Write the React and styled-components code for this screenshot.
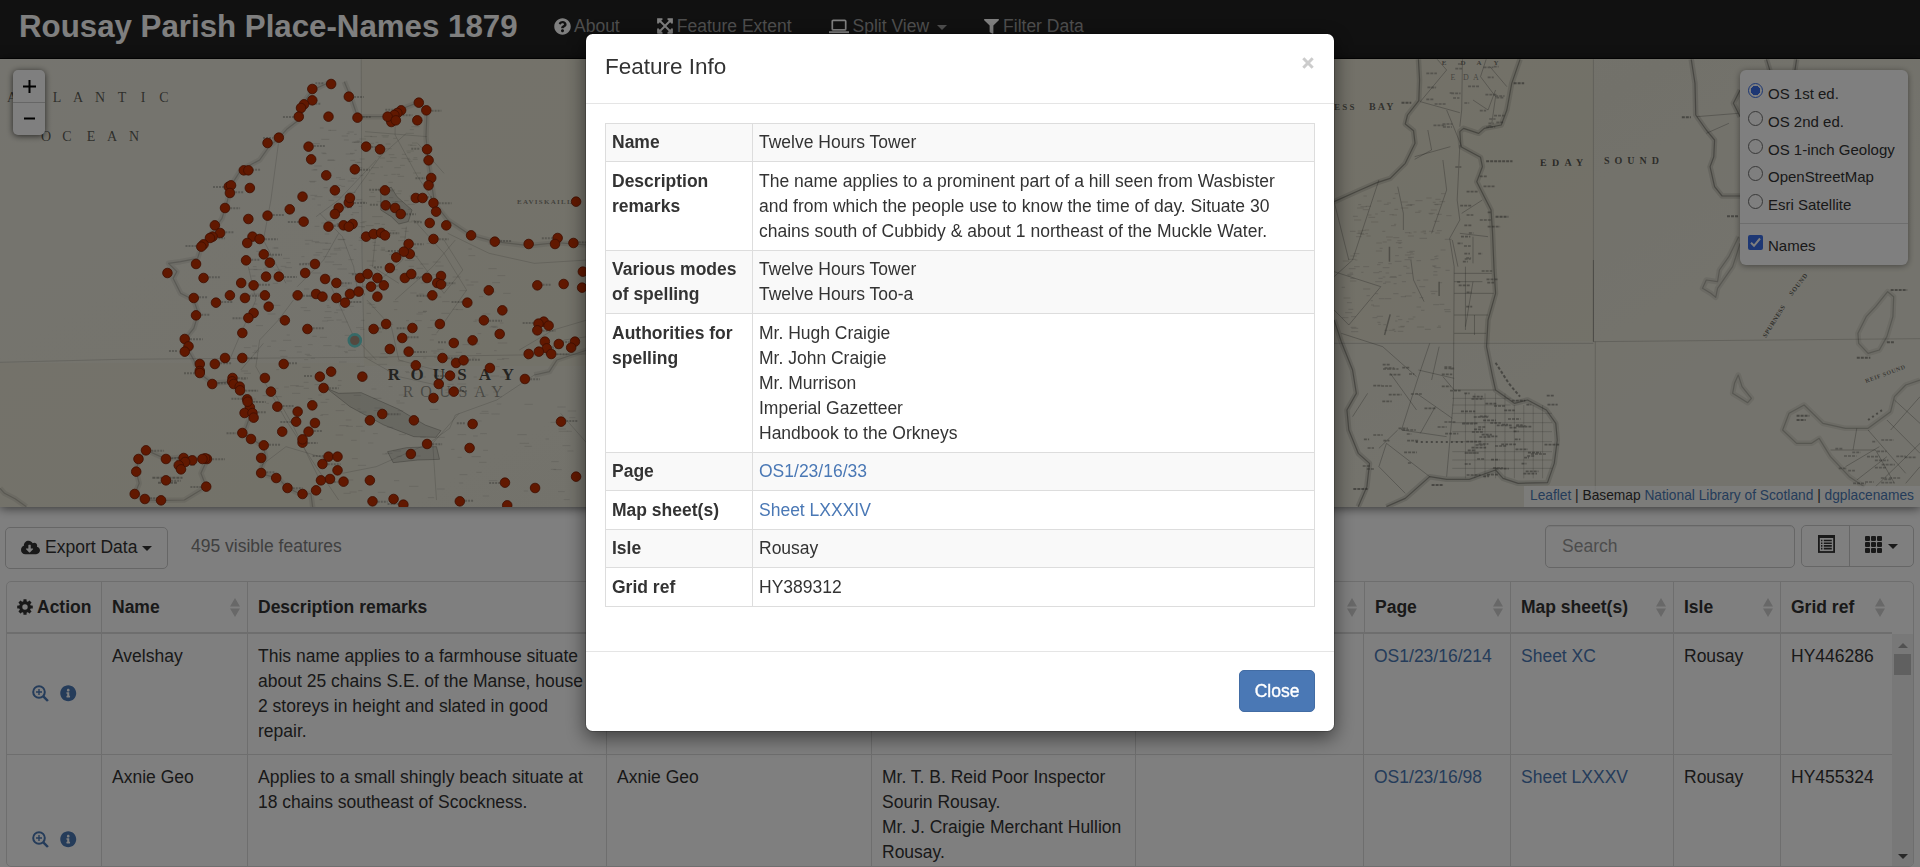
import React from "react";
import styled, { createGlobalStyle } from "styled-components";
import { FaQuestionCircle, FaExpandArrowsAlt, FaFilter, FaCloudDownloadAlt, FaInfoCircle } from "react-icons/fa";

const LINK = "#4a78b5";

const GlobalStyle = createGlobalStyle`
  * { box-sizing: border-box; }
  html, body { margin: 0; height: 100%; overflow: hidden; }
  body {
    font: 17.5px/25px "Liberation Sans", Arial, sans-serif;
    color: #333;
    background: #fff;
  }
  #root { height: 100%; }
`;

const Page = styled.div`
  height: 867px;
  display: flex;
  flex-direction: column;
  overflow: hidden;
`;

/* ---------- navbar ---------- */
const Navbar = styled.nav`
  flex: none;
  height: 59px;
  display: flex;
  align-items: flex-start;
  background: #222;
  border-bottom: 1px solid #080808;
  padding-left: 19px;
`;
const Brand = styled.h1`
  margin: 0 37px 0 0;
  width: 498px;
  font-size: 31.25px;
  line-height: 53px;
  font-weight: bold;
  color: #fff;
  white-space: nowrap;
`;
const NavItem = styled.a`
  display: flex;
  align-items: center;
  height: 52px;
  gap: ${(p) => p.$gap || 3}px;
  margin-right: ${(p) => p.$after}px;
  color: #9d9d9d;
  white-space: nowrap;
  svg { color: #fff; }
`;
const Caret = styled.span`
  width: 0;
  height: 0;
  margin: ${(p) => p.$m || "3px 0 0 4px"};
  border: 5px solid transparent;
  border-top-color: currentColor;
  border-bottom: 0;
`;

/* ---------- map ---------- */
const MapPane = styled.section`
  flex: none;
  position: relative;
  height: 448px;
  background: #e8e6d8;
  box-shadow: 0 1px 10px rgba(0, 0, 0, 0.6);
  z-index: 1;
`;
const MapSvg = styled.svg`
  display: block;
  width: 1920px;
  height: 448px;
`;
const ZoomControl = styled.div`
  position: absolute;
  left: 13px;
  top: 11px;
  width: 32px;
  border-radius: 5px;
  background: #fff;
  box-shadow: 0 1px 6px rgba(0, 0, 0, 0.65);
`;
const ZoomButton = styled.div`
  height: 32px;
  display: flex;
  align-items: center;
  justify-content: center;
  color: #000;
  & + & { height: 33px; padding-bottom: 2px; border-top: 1px solid #ccc; }
`;
const Layers = styled.div`
  position: absolute;
  top: 11px;
  right: 12px;
  width: 168px;
  height: 195px;
  padding: 8px 0 0 8px;
  border-radius: 6px;
  background: #fff;
  box-shadow: 0 1px 6px rgba(0, 0, 0, 0.4);
  font-size: 15px;
`;
const LayerRow = styled.label`
  display: flex;
  align-items: flex-start;
  height: 27.8px;
  gap: 5px;
  line-height: 31.5px;
  white-space: nowrap;
`;
const LayerMark = styled.span`
  flex: none;
  width: 15px;
  height: 15px;
  margin-top: 5px;
  border-radius: 50%;
  border: 1.3px solid ${(p) => (p.$on ? "#3a6fe8" : "#707070")};
  background: ${(p) => (p.$on ? "radial-gradient(circle, #3a6fe8 4.5px, #fff 5px)" : "#fff")};
`;
const LayerCheck = styled.svg`
  flex: none;
  width: 15px;
  height: 15px;
  margin-top: 5px;
`;
const LayerDivider = styled.div`
  margin: 6px 0 6px -8px;
  border-top: 1px solid #ddd;
`;
const Attribution = styled.div`
  position: absolute;
  right: 0;
  bottom: 0;
  width: 396px;
  padding: 0 6px;
  background: rgba(255, 255, 255, 0.7);
  font-size: 13.75px;
  line-height: 20px;
  height: 21px;
  white-space: nowrap;
`;
const Link = styled.a`
  color: ${LINK};
`;

/* ---------- table panel ---------- */
const Panel = styled.section`
  flex: 1;
  min-height: 0;
  display: flex;
  flex-direction: column;
  padding: 18px 6px 0 5px;
`;
const Toolbar = styled.div`
  flex: none;
  height: 56px;
  display: flex;
  align-items: flex-start;
`;
const ExportButton = styled.button`
  display: flex;
  align-items: center;
  width: 163px;
  height: 42px;
  margin: 2px 23px 0 0;
  padding: 0 0 2px 15px;
  gap: 5px;
  border: 1px solid #ccc;
  border-radius: 5px;
  background: #fff;
  font: inherit;
  color: #333;
  white-space: nowrap;
`;
const Count = styled.span`
  margin-top: 9px;
  color: #808080;
`;
const Search = styled.div`
  width: 250px;
  height: 43px;
  margin-left: auto;
  padding-left: 16px;
  border: 1px solid #ccc;
  border-radius: 5px;
  box-shadow: inset 0 1px 1px rgba(0, 0, 0, 0.075);
  line-height: 41px;
  color: #999;
`;
const ButtonGroup = styled.div`
  display: flex;
  width: 113px;
  height: 42px;
  margin-left: 6px;
  border: 1px solid #ccc;
  border-radius: 5px;
`;
const GroupButton = styled.div`
  display: flex;
  align-items: center;
  padding: 0 0 4px 16px;
  width: ${(p) => p.$w}px;
  & + & { border-left: 1px solid #ccc; padding-left: 15px; }
`;
const Table = styled.div`
  flex: none;
  display: flex;
  flex-direction: column;
  margin-left: 1px;
  height: 286px;
  border: 1px solid #ddd;
  border-radius: 5px;
  overflow: hidden;
`;
const HeadRow = styled.div`
  flex: none;
  display: grid;
  grid-template-columns: 94px 146px 359px 265px 264px 229px 146px 163px 107px 112px;
  width: 1885px;
  height: 52px;
  border-bottom: 2px solid #ddd;
`;
const HeadCell = styled.div`
  display: flex;
  align-items: center;
  justify-content: space-between;
  gap: 4px;
  padding: 0 7px 0 10px;
  font-weight: bold;
  white-space: nowrap;
  & + & { border-left: 1px solid #ddd; }
  &:first-child { justify-content: flex-start; }
`;
const Body = styled.div`
  flex: 1;
  min-height: 0;
  display: flex;
`;
const Rows = styled.div`
  width: 1885px;
  overflow: hidden;
`;
const Row = styled.div`
  display: grid;
  grid-template-columns: 94px 146px 359px 265px 264px 228px 147px 163px 107px 112px;
  height: ${(p) => p.$h}px;
  border-bottom: 1px solid #ddd;
`;
const Cell = styled.div`
  padding: 10px 10px 0;
  border-left: 1px solid #ddd;
  white-space: pre-line;
`;
const ActionCell = styled.div`
  display: flex;
  align-items: center;
  gap: 11px;
  padding: 0 0 1px 25px;
  color: ${LINK};
`;
const ScrollTrack = styled.div`
  flex: 1;
  display: flex;
  flex-direction: column;
  align-items: center;
  justify-content: space-between;
  padding: 9px 0 7px;
  background: #f1f1f1;
`;
const ScrollTop = styled.div`
  display: flex;
  flex-direction: column;
  align-items: center;
  gap: 6px;
`;
const Thumb = styled.div`
  width: 17px;
  height: 21px;
  background: #c1c1c1;
`;

/* ---------- modal ---------- */
const Backdrop = styled.div`
  position: fixed;
  inset: 0;
  z-index: 10;
  display: flex;
  justify-content: center;
  align-items: flex-start;
  padding-top: 33px;
  background: rgba(0, 0, 0, 0.5);
`;
const Dialog = styled.div`
  width: 750px;
  height: 699px;
  border: 1px solid rgba(0, 0, 0, 0.2);
  border-radius: 7.5px;
  background: #fff;
  background-clip: padding-box;
  box-shadow: 0 6px 19px rgba(0, 0, 0, 0.5);
`;
const DialogHeader = styled.header`
  display: flex;
  justify-content: space-between;
  height: 70px;
  padding: 17px 20px 0 19px;
  border-bottom: 1px solid #e5e5e5;
`;
const DialogTitle = styled.h4`
  margin: 0;
  font-size: 22.5px;
  font-weight: normal;
  line-height: 32px;
`;
const CloseMark = styled.svg`
  width: 12px;
  height: 12px;
  margin-top: 6px;
`;
const DialogBody = styled.div`
  height: 548px;
  padding: 19px 19px 0;
  border-bottom: 1px solid #e5e5e5;
`;
const InfoTable = styled.dl`
  margin: 0;
  width: 710px;
  border: 1px solid #ddd;
  border-bottom: 0;
`;
const InfoRow = styled.div`
  --pad: ${(p) => (p.$h % 2 ? 7 : 6)}px;
  display: grid;
  grid-template-columns: 147px 1fr;
  height: ${(p) => p.$h}px;
  border-bottom: 1px solid #ddd;
  &:nth-child(3) { --pad: 6px; }
  &:nth-child(odd) { background: #f9f9f9; }
`;
const InfoLabel = styled.dt`
  padding: var(--pad) 6px 0;
  border-right: 1px solid #ddd;
  font-weight: bold;
`;
const InfoValue = styled.dd`
  margin: 0;
  padding: var(--pad) 6px 0;
  white-space: pre-line;
`;
const DialogFooter = styled.footer`
  display: flex;
  justify-content: flex-end;
  padding: 18px 19px 0;
`;
const CloseButton = styled.button`
  width: 76px;
  height: 42px;
  padding: 0;
  border: 1px solid #426ca4;
  border-radius: 5px;
  background: ${LINK};
  color: #fff;
  font: inherit;
  -webkit-text-stroke: 0.35px #fff;
`;

/* ---------- icons ---------- */
const LaptopIcon = () => (
  <svg width="20" height="15" viewBox="0 0 20 15" fill="none" stroke="currentColor">
    <rect x="3.3" y="1.3" width="13.4" height="9.6" rx="1" strokeWidth="1.7" />
    <path d="M0 13.2h20" strokeWidth="2" />
  </svg>
);
const CogIcon = () => (
  <svg width="16" height="16" viewBox="-8 -8 16 16">
    {[0, 45, 90, 135].map((a) => (
      <rect key={a} x="-1.6" y="-7.8" width="3.2" height="15.6" rx=".5" transform={`rotate(${a})`} fill="#333" />
    ))}
    <circle r="4.3" fill="#fff" stroke="#333" strokeWidth="3.2" />
  </svg>
);
const ZoomInIcon = () => (
  <svg width="17" height="17" viewBox="0 0 17 17" fill="none" stroke="currentColor">
    <circle cx="7" cy="7" r="5.8" strokeWidth="2" />
    <path d="M7 4v6M4 7h6" strokeWidth="1.4" />
    <path d="M11.3 11.3l4.6 4.7" strokeWidth="2.5" />
  </svg>
);
const ListIcon = () => (
  <svg width="17" height="18" viewBox="0 0 17 18" fill="none" stroke="#333">
    <rect x=".9" y="1.2" width="15.2" height="15.8" strokeWidth="1.8" />
    <path d="M0 1.5h17" strokeWidth="3" />
    <path d="M5.8 5.5h8M5.8 8.2h8M5.8 10.9h8M5.8 13.6h8" strokeWidth="1.6" />
    <path d="M3 5.5h1.4M3 8.2h1.4M3 10.9h1.4M3 13.6h1.4" strokeWidth="1.6" />
  </svg>
);
const GridIcon = () => (
  <svg width="17" height="17" viewBox="0 0 17 17" fill="#333">
    {[0, 6, 12].map((y) => [0, 6, 12].map((x) => <rect key={x + "-" + y} x={x} y={y} width="5" height="5" rx="1" />))}
  </svg>
);
const SortIcon = () => (
  <svg width="10" height="19" viewBox="0 0 10 19" fill="#d0d0d0">
    <path d="M5 0l5 8.6H0zM5 19l5-8.6H0z" />
  </svg>
);

/* ---------- map data ----------
   Coordinates are in sheet units; SHEET converts them to pixels. */
const SHEET = { x: 0.37628, y: 1 / 3 };

const FEATURES = `880,252 830,267 927,290 830,301 808,313 800,324 794,350 873,350 950,353 1113,308 1133,331 1109,361 1066,331 1056,339 1048,345 1040,366 1030,350 1052,361
741,413 711,429 820,440 827,478 973,440 1010,448 1135,448 1139,481 943,508 867,526 648,511 660,511 608,560 614,556 611,579 664,564 598,624 890,571 1023,571 804,590 927,608 930,594 900,624 890,642
1146,534 1139,556 1105,594 1123,594 1152,609 1159,635 1025,616 1050,624 1065,642 770,628 711,647 660,657 807,665 571,676 585,699 565,710 558,714 541,733 535,740 671,710 690,717 657,729 873,680 913,676 937,672 927,680
973,710 993,702 1013,699 1023,706 1142,669 1186,676 1152,717 1252,706 1315,725 1405,732 1482,714 1475,732 1524,729 1531,605 1086,732 1089,762 1073,755 1053,772
701,763 521,792 654,781 717,788 837,792 445,819 541,834 707,830 741,830 811,819 1036,804 864,837 894,849 641,849 674,856 957,834 977,822 1003,834 986,860 1020,856 1076,834 1093,822 1135,834 1172,828 1162,849 1172,853
515,894 611,886 704,886 651,894 574,908 714,920 791,886 840,882 857,890 894,894 930,882 953,875 917,908 1003,890 1149,886 1299,871 1428,856 1498,852 1549,815 1547,863 1242,908 1335,931 1286,961 1328,1002
521,946 674,939 660,954 757,961 817,987 644,999 491,1017 501,1039 491,1055 598,1074 644,1074 531,1092 571,1092 531,1113 531,1119 564,1152 754,1092 704,1134 618,1134 617,1144 621,1152 637,1160 638,1171 720,1175
993,987 1026,972 1096,984 1169,972 1069,1014 1036,1047 1086,1055 1105,1096 1206,1029 1256,1021 1176,1074 1212,1089 1232,1081 1302,1104 1196,1127 1166,1152 1206,1175 1152,1194 1395,1137 1445,965 1431,971 1458,977 1428,991 1448,1025 1453,1045 1485,1032 1528,1025 1518,1043 1432,1055 1405,1062 1465,1062
880,1115 850,1130 963,1130 860,1164 830,1216 737,1220 791,1235 787,1265 837,1269 820,1295 750,1295 804,1328 804,1318 657,1198 664,1222 658,1205 650,1239 671,1239 674,1253 644,1299 667,1317 701,1336
983,1261 1016,1242 1100,1261 1256,1272 1248,1344 1135,1332 1092,1362 1491,1265 1531,1430 1342,1448 1422,1464 1222,1504 1348,1516 990,1504 1046,1497 1072,1514 983,1441
388,1351 368,1377 441,1377 488,1374 511,1381 492,1386 475,1396 481,1408 550,1377 545,1375 538,1377 362,1415 441,1441 358,1482 385,1497 428,1501 548,1460 694,1374 694,1419 734,1434 764,1464 804,1482 873,1370 897,1370 857,1392 897,1411 853,1441 877,1437 913,1445 840,1471`
  .trim()
  .split(/\s+/)
  .map((pair) => pair.split(",").map(Number));

const WEST_COAST = [
  "M880 245L830 270 800 320 800 355 762 388 740 415 715 440 690 480 640 510 612 560 605 600 590 655 568 690 535 740 525 775 480 785 448 790 470 815 460 835 480 880 515 900 527 940 515 985 490 1020 500 1050 515 1080 530 1120 565 1150 615 1145 650 1190 664 1250 648 1300 700 1340 706 1370 690 1420 740 1435 764 1464 804 1485 826 1480 832 1530",
  "M915 245L935 300 950 350 1030 350 1060 330 1110 308 1135 330 1132 410 1138 480 1145 535 1155 610 1190 660 1250 705 1315 725 1405 737 1480 728 1560 735",
  "M390 1351L368 1377 362 1415 370 1450 358 1482 390 1500 428 1501 490 1500 548 1460 534 1420 550 1380 490 1370 441 1377Z",
  "M0 1465L12 1480 40 1496 70 1520",
  "M1560 1050L1480 1080 1460 1115 1420 1125",
];
const LOCHS = [
  "M868 1165L900 1180 960 1178 1060 1228 1130 1275 1172 1292 1158 1312 1100 1310 1020 1275 930 1220Z",
  "M1030 1355L1080 1343 1160 1340 1168 1378 1110 1380 1045 1388Z",
  "M1012 570L1040 562 1055 590 1095 630 1085 665 1060 672 1040 650 1012 630Z",
];
const WEST_ROADS = [
  "M960 178L962 760 968 1072", "M0 1087L320 1078 960 1072 1560 1062",
  "M1050 345V405L1110 530 1145 590", "M1135 410L970 395", "M850 640L910 710 940 800 950 870",
  "M1420 1125L1320 1200 1210 1245 1195 1285 1140 1330 1000 1400 910 1420",
  "M1000 480L900 600 840 650", "M1080 400L1010 470 940 580", "M1080 680L1070 780 1000 850", "M1100 660L1180 760 1240 870 1160 1000",
  "M1190 700L1300 760 1420 790 1560 780", "M780 900L740 960 690 1020 680 1100 760 1260 840 1400 900 1500", "M720 1160L780 1280 850 1440",
  "M660 800L680 900 640 1000 610 1080", "M1210 720L1150 800 1050 900", "M975 900L1040 980 1060 1080 1190 1120", "M740 430L720 600 700 720 760 850",
  "M1220 1240L1150 1330 1160 1500", "M970 1072L1060 1130 1180 1160", "M1380 1050L1470 990 1560 960", "M1400 1080L1500 1020 1560 1010",
  "M690 1400L760 1340 880 1380", "M1110 430L1180 520", "M1100 760L1180 880 1230 810 1180 720", "M900 700L860 780 790 860",
  "M1000 690L990 800 1060 850", "M1490 1240L1560 1330", "M700 1030L640 1110", "M880 860L940 1010 1000 1080",
];
const EAST_COAST = [
  "M235 178L238 240 236 302 206 345 200 372 222 392 226 430 200 490 160 535 125 548 80 570 11 605",
  "M505 178L483 250 470 330 455 375 410 385 395 400 355 385 345 395 348 440 400 472 405 500 390 545 410 590 428 630 432 700 436 810 440 880 420 960 416 1040 432 1130 440 1170 490 1210 525 1200 575 1230 600 1270 604 1320 596 1390 578 1448 500 1450 460 1435 440 1410 370 1438 310 1438 265 1430 200 1495 150 1520",
  "M11 960L30 1025 60 1110 70 1180 45 1230 50 1290 75 1360 105 1390 98 1460 75 1520",
  "M960 178L970 250 972 345 1000 390 1022 420 1020 470 1010 500 1022 560 1042 588 1090 588",
  "M1090 270L1072 310 1090 350M1160 178L1170 215M1240 178L1235 215",
];
const EAST_ISLETS = [
  "M1086 710L1060 770 1035 810 1030 845 1000 840 990 865 1012 880 1025 892 1030 865 1070 800 1090 730",
  "M1482 875L1498 890 1496 950 1480 1010 1460 1050 1430 1060 1405 1030 1403 1000 1425 950 1450 920Z",
  "M1085 1125L1095 1160 1120 1195 1110 1208 1070 1180 1075 1150Z",
  "M1568 1140L1530 1155 1500 1190 1490 1235 1430 1285 1370 1285 1310 1270 1260 1215 1220 1240 1203 1290 1240 1330 1280 1330 1300 1315 1330 1370 1380 1430 1420 1460",
];
const EAST_ROADS = [
  "M352 178L350 330 345 380", "M240 305L345 338M240 305L310 210 285 178", "M415 178L400 230 440 290 430 370", "M440 270L420 330 380 300",
  "M225 470L320 440M260 390L270 450 225 478", "M345 435L338 600 345 660 318 715 330 800 328 1200 310 1430", "M11 815L135 860 50 975 11 930",
  "M180 560L195 640 195 690M300 480L310 570 270 700", "M130 540L60 780 11 830", "M215 780L222 840 250 905", "M330 820H430M330 845H405M330 880H435M330 945H420M330 1000H415",
  "M380 845L360 980M384 945V1005M360 800V990", "M265 1030L235 1130 190 1290M290 1040L270 1140M30 1000L140 1040 230 1130", "M235 1110L330 1135M230 1180L325 1255M190 1290L310 1310M130 1345L180 1290",
  "M160 1120L230 1230M100 1180L60 1250M280 1220L240 1300M130 1400L200 1480M130 1400L150 1330 265 1430", "M440 1170L330 1170 300 1130",
  "M975 350L1085 340M1000 400L1060 370", "M1330 1350H1450L1500 1450M1400 1285L1390 1350M1430 1290L1530 1420M1370 1400L1460 1340M1400 1440L1480 1370M1480 1260L1568 1360M1450 1460L1568 1330M1500 1200L1568 1270M1568 1190L1490 1290M1530 1450L1568 1400",
  "M345 700L420 710M325 720L340 800M380 710V790M405 600L350 640", "M11 605L50 780M310 330L350 440M425 200L470 260",
];

/* Repeatable pseudo-random numbers for the map's fine hatching. */
const seeded = (seed) => () => {
  seed = (seed * 1664525 + 1013904223) % 4294967296;
  return seed / 4294967296;
};
const scatter = (count, seed, [x, y, w, h], len) => {
  const next = seeded(seed);
  let d = "";
  for (let i = 0; i < count; i++) {
    d += `M${(x + next() * w).toFixed(0)} ${(y + next() * h).toFixed(0)}h${(len * (0.4 + next())).toFixed(0)}`;
  }
  return d;
};
const LABELS_WEST = FEATURES.filter((_, i) => i % 2 === 0)
  .map(([x, y], i) => `M${x + (i % 3 ? 14 : -42)} ${y + (i % 2 ? 1 : -2)}h${22 + (i % 4) * 4}`)
  .join("");

const Coast = ({ d, o = 1 }) => (
  <g opacity={o}>
    <path d={d} fill="none" stroke="#55554d" strokeOpacity=".17" strokeWidth="5.5" strokeLinejoin="round" vectorEffect="non-scaling-stroke" />
    <path d={d} fill="none" stroke="#3c3c38" strokeOpacity=".42" strokeWidth="1.2" strokeLinejoin="round" vectorEffect="non-scaling-stroke" />
  </g>
);
const Fine = ({ d, o = 0.25, w = 1, dash }) => (
  <path d={d} fill="none" stroke="#3c3c38" strokeOpacity={o} strokeWidth={w} strokeDasharray={dash} vectorEffect="non-scaling-stroke" />
);
const MapText = ({ xs, x, y, size, o = 0.75, rotate = 0, spacing = 0, bold, children }) => (
  <text
    x={xs || x}
    y={y}
    fontFamily='"Liberation Serif", serif'
    fontWeight={bold ? "bold" : "normal"}
    fontSize={size}
    letterSpacing={spacing}
    fill="#2c2c28"
    fillOpacity={o}
    textAnchor={xs ? "middle" : "start"}
    transform={rotate ? `rotate(${rotate} ${x} ${y})` : undefined}
  >
    {children}
  </text>
);

const ParishMap = () => (
  <MapSvg viewBox="0 59 1920 448">
    <defs>
      <linearGradient id="paper" x1="0" x2="1" y1="0" y2=".4">
        <stop offset="0" stopColor="#ebe9de" />
        <stop offset=".45" stopColor="#e9e7d9" />
        <stop offset=".75" stopColor="#e5e3d5" />
        <stop offset="1" stopColor="#e9e7da" />
      </linearGradient>
    </defs>
    <rect y="59" width="1920" height="448" fill="url(#paper)" />
    <path d="M361 59H600V366H364ZM0 363H360V507H0ZM1334 59H1593V341H1334Z" fill="#e4e0c8" opacity=".35" />

    <g transform={`scale(${SHEET.x} ${SHEET.y})`}>
      {WEST_COAST.map((d) => <Coast key={d} d={d} o={0.6} />)}
      {LOCHS.map((d) => <path key={d} d={d} fill="#8c8c84" fillOpacity=".25" stroke="#55554d" strokeOpacity=".35" strokeLinejoin="round" vectorEffect="non-scaling-stroke" />)}
      {WEST_ROADS.map((d) => <Fine key={d} d={d} o={0.17} />)}
      <Fine d={scatter(170, 7, [820, 380, 280, 400], 16)} o={0.13} />
      <Fine d={scatter(260, 19, [640, 720, 700, 520], 18)} o={0.12} />
      <Fine d={scatter(80, 31, [840, 1200, 680, 300], 18)} o={0.12} />
      <Fine d={LABELS_WEST} o={0.3} w={2} dash="2 1" />
      <Fine d="M405 1433h80M420 1448h50" o={0.4} w={2} dash="3 1" />
    </g>

    <g transform={`translate(1330 0) scale(${SHEET.x} ${SHEET.y})`}>
      {EAST_COAST.map((d) => <Coast key={d} d={d} />)}
      {EAST_ISLETS.map((d) => <Coast key={d} d={d} o={0.65} />)}
      {EAST_ROADS.map((d) => <Fine key={d} d={d} o={0.3} />)}
      <Fine d="M700 178V1025L1568 1016M11 1030H700M705 1025V1480" o={0.2} />
      <Fine d="M700 780V1025" o={0.35} />
      {[360, 385, 412, 440, 465, 490, 515, 540, 565].map((x) => <Fine key={x} d={`M${x} ${x > 480 ? 1215 : 1180}V${1435}`} o={0.2} />)}
      {[1195, 1215, 1240, 1268, 1295, 1325, 1355, 1380, 1405].map((y) => <Fine key={y} d={`M325 ${y}H${y > 1230 ? 590 : 480}`} o={0.2} />)}
      <Fine d={scatter(190, 5, [30, 580, 280, 420], 14)} o={0.16} />
      <Fine d={scatter(60, 11, [340, 1180, 240, 250], 30)} o={0.45} w={1.6} dash="3 1" />
      <Fine d={scatter(34, 23, [80, 1080, 240, 340], 26)} o={0.4} w={1.6} dash="3 1" />
      <Fine d={scatter(28, 29, [250, 190, 200, 200], 24)} o={0.35} w={1.6} dash="3 1" />
      <Fine d={scatter(26, 37, [330, 480, 90, 480], 24)} o={0.4} w={1.6} dash="3 1" />
      <Fine d={scatter(20, 41, [1340, 1320, 200, 130], 26)} o={0.35} w={1.6} dash="3 1" />
      <Fine d="M190 308h26M488 250h28M935 352h24M415 484h70M440 650h34M1490 870h44M1400 1073h36M1480 1027h20M1240 1247h34M1240 1260h24M270 1455h32M1055 649h32M62 1467h38" o={0.5} w={2} dash="3 1" />
      <Fine d="M440 1088L475 1150 505 1190" o={0.5} w={2} dash="3 2" />
      <Fine d="M1430 1260L1470 1228M228 1326H358" o={0.5} w={2} dash="2 3" />
      <Fine d="M160 943L145 1005M290 845V888M158 740V785" o={0.4} w={1.5} />
    </g>

    <MapText xs="12 57 78 100 122 143 164" y="102" size="14">ALANTIC</MapText>
    <MapText xs="46 67 91 112 134" y="141" size="14">OCEAN</MapText>
    <MapText xs="394 417 439 462 485 508" y="380" size="17" bold o={0.85}>ROUSAY</MapText>
    <MapText xs="408 426 445 463 480 497" y="397" size="16" o={0.45}>ROUSAY</MapText>
    <MapText x="517" y="204" size="7" spacing={1.3} bold o={0.55}>EAVISKAILL</MapText>
    <MapText x="1334" y="110" size="9" spacing={2.2} bold o={0.7}>ESS</MapText>
    <MapText x="1369" y="110" size="10" spacing={2.2} bold o={0.7}>BAY</MapText>
    <MapText x="1540" y="166" size="10" spacing={5.3} bold o={0.8} rotate={-0.5}>EDAY</MapText>
    <MapText x="1604" y="164" size="10" spacing={5} bold o={0.75}>SOUND</MapText>
    <MapText xs="1444 1463 1479 1496" y="65" size="7" bold o={0.6}>EDAY</MapText>
    <MapText xs="1453 1466 1476" y="80" size="8" o={0.5}>EDA</MapText>
    <MapText x="1766" y="338" size="6.5" spacing={0.5} bold o={0.75} rotate={-58}>SPURNESS</MapText>
    <MapText x="1792" y="296" size="6.5" spacing={0.8} bold o={0.75} rotate={-52}>SOUND</MapText>
    <MapText x="1866" y="383" size="6" spacing={0.6} bold o={0.6} rotate={-20}>REIF SOUND</MapText>

    {FEATURES.map(([x, y]) => (
      <circle key={`${x}-${y}`} cx={x * SHEET.x} cy={y * SHEET.y} r="4.8" fill="#c23000" stroke="#7a1c00" strokeWidth=".8" />
    ))}
    <circle cx="354.8" cy="340.4" r="6" fill="#a8917f" stroke="#6cd4d0" strokeWidth="2.6" />
  </MapSvg>
);

const LAYERS = ["OS 1st ed.", "OS 2nd ed.", "OS 1-inch Geology", "OpenStreetMap", "Esri Satellite"];

const HEADINGS = ["Name", "Description remarks", "", "", "", "Page", "Map sheet(s)", "Isle", "Grid ref"];

const ROWS = [
  {
    h: 121,
    name: "Avelshay",
    remarks: "This name applies to a farmhouse situate about 25 chains S.E. of the Manse, house 2 storeys in height and slated in good repair.",
    page: "OS1/23/16/214",
    sheet: "Sheet XC",
    isle: "Rousay",
    grid: "HY446286",
  },
  {
    h: 171,
    name: "Axnie Geo",
    remarks: "Applies to a small shingly beach situate at 18 chains southeast of Scockness.",
    spelling: "Axnie Geo",
    authorities: "Mr. T. B. Reid Poor Inspector Sourin Rousay.\nMr. J. Craigie Merchant Hullion Rousay.",
    page: "OS1/23/16/98",
    sheet: "Sheet LXXXV",
    isle: "Rousay",
    grid: "HY455324",
  },
];

const INFO = [
  { h: 38, label: "Name", value: "Twelve Hours Tower" },
  {
    h: 89,
    label: "Description remarks",
    value:
      "The name applies to a prominent part of a hill seen from Wasbister and from which the people use to know the time of day. Situate 30 chains south of Cubbidy & about 1 northeast of the Muckle Water.",
  },
  { h: 63, label: "Various modes of spelling", value: "Twelve Hours Tower\nTwelve Hours Too-a" },
  {
    h: 139,
    label: "Authorities for spelling",
    value: "Mr. Hugh Craigie\nMr. John Craigie\nMr. Murrison\nImperial Gazetteer\nHandbook to the Orkneys",
  },
  { h: 38, label: "Page", value: "OS1/23/16/33", link: true },
  { h: 39, label: "Map sheet(s)", value: "Sheet LXXXIV", link: true },
  { h: 38, label: "Isle", value: "Rousay" },
  { h: 39, label: "Grid ref", value: "HY389312" },
];

export default function App() {
  return (
    <>
      <GlobalStyle />
      <Page>
        <Navbar>
          <Brand>Rousay Parish Place-Names 1879</Brand>
          <NavItem $after={36}><FaQuestionCircle size={17} />About</NavItem>
          <NavItem $after={37}><FaExpandArrowsAlt size={18} />Feature Extent</NavItem>
          <NavItem $after={37} $gap={4}><LaptopIcon />Split View<Caret /></NavItem>
          <NavItem $after={0} $gap={4}><FaFilter size={15} />Filter Data</NavItem>
        </Navbar>

        <MapPane>
          <ParishMap />
          <ZoomControl>
            <ZoomButton>
              <svg width="13" height="13" viewBox="0 0 13 13" stroke="#000" strokeWidth="2"><path d="M6.5 0v13M0 6.5h13" /></svg>
            </ZoomButton>
            <ZoomButton>
              <svg width="11" height="13" viewBox="0 0 11 13" stroke="#000" strokeWidth="2"><path d="M0 6.5h11" /></svg>
            </ZoomButton>
          </ZoomControl>
          <Layers>
            {LAYERS.map((name, i) => (
              <LayerRow key={name}><LayerMark $on={i === 0} />{name}</LayerRow>
            ))}
            <LayerDivider />
            <LayerRow>
              <LayerCheck viewBox="0 0 15 15">
                <rect width="15" height="15" rx="2" fill="#3a6fe8" />
                <path d="M3 7.8l3 3 6-7.3" fill="none" stroke="#fff" strokeWidth="2" />
              </LayerCheck>
              Names
            </LayerRow>
          </Layers>
          <Attribution>
            <Link>Leaflet</Link> | Basemap <Link>National Library of Scotland</Link> | <Link>dgplacenames</Link>
          </Attribution>
        </MapPane>

        <Panel>
          <Toolbar>
            <ExportButton><FaCloudDownloadAlt size={19} />Export Data<Caret $m="3px 0 0 0" /></ExportButton>
            <Count>495 visible features</Count>
            <Search>Search</Search>
            <ButtonGroup>
              <GroupButton $w={47}><ListIcon /></GroupButton>
              <GroupButton $w={64}><GridIcon /><Caret $m="5px 0 0 6px" /></GroupButton>
            </ButtonGroup>
          </Toolbar>
          <Table>
            <HeadRow>
              <HeadCell><CogIcon />Action</HeadCell>
              {HEADINGS.map((text, i) => (
                <HeadCell key={i}><span>{text}</span><SortIcon /></HeadCell>
              ))}
            </HeadRow>
            <Body>
              <Rows>
                {ROWS.map((row) => (
                  <Row key={row.name} $h={row.h}>
                    <ActionCell><ZoomInIcon /><FaInfoCircle size={16.5} /></ActionCell>
                    <Cell>{row.name}</Cell>
                    <Cell>{row.remarks}</Cell>
                    <Cell>{row.spelling}</Cell>
                    <Cell>{row.authorities}</Cell>
                    <Cell />
                    <Cell><Link>{row.page}</Link></Cell>
                    <Cell><Link>{row.sheet}</Link></Cell>
                    <Cell>{row.isle}</Cell>
                    <Cell>{row.grid}</Cell>
                  </Row>
                ))}
              </Rows>
              <ScrollTrack>
                <ScrollTop>
                  <svg width="10" height="5" viewBox="0 0 10 5"><path d="M0 5l5-5 5 5z" fill="#a3a3a3" /></svg>
                  <Thumb />
                </ScrollTop>
                <svg width="10" height="5" viewBox="0 0 10 5"><path d="M0 0l5 5 5-5z" fill="#505050" /></svg>
              </ScrollTrack>
            </Body>
          </Table>
        </Panel>
      </Page>

      <Backdrop>
        <Dialog>
          <DialogHeader>
            <DialogTitle>Feature Info</DialogTitle>
            <CloseMark viewBox="0 0 12 12"><path d="M1.3 1.3l9.4 9.4M10.7 1.3l-9.4 9.4" stroke="#ccc" strokeWidth="3" /></CloseMark>
          </DialogHeader>
          <DialogBody>
            <InfoTable>
              {INFO.map((row) => (
                <InfoRow key={row.label} $h={row.h}>
                  <InfoLabel>{row.label}</InfoLabel>
                  <InfoValue>{row.link ? <Link>{row.value}</Link> : row.value}</InfoValue>
                </InfoRow>
              ))}
            </InfoTable>
          </DialogBody>
          <DialogFooter>
            <CloseButton>Close</CloseButton>
          </DialogFooter>
        </Dialog>
      </Backdrop>
    </>
  );
}
